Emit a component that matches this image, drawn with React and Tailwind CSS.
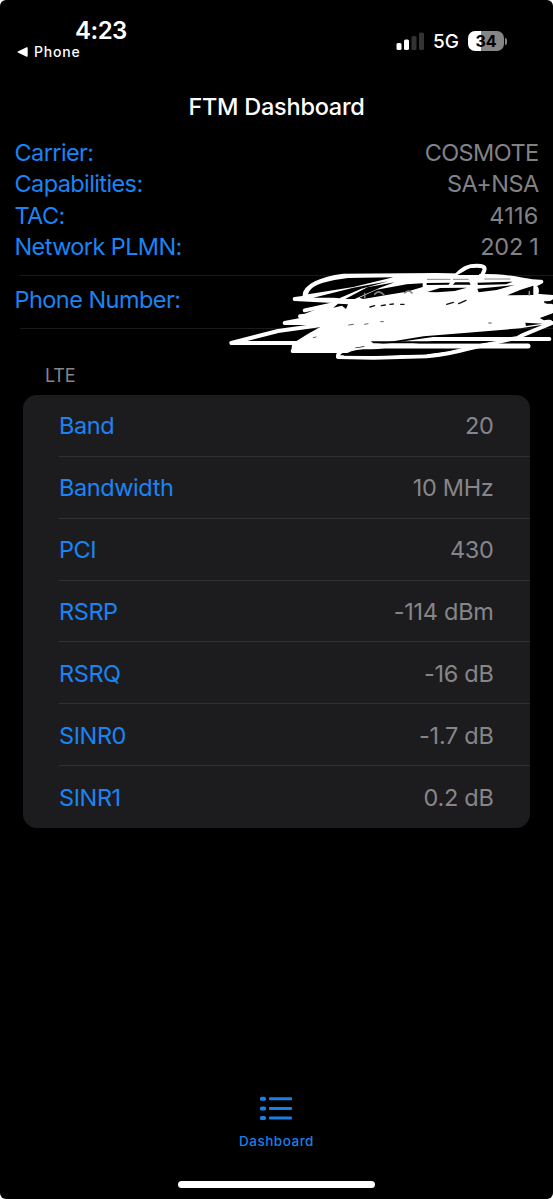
import React from "react";

const infoRows = [
  { label: "Carrier:", value: "COSMOTE", spacing: "tracking-[-0.6px]" },
  { label: "Capabilities:", value: "SA+NSA", spacing: "tracking-[-0.6px]" },
  { label: "TAC:", value: "4116", spacing: "tracking-[0.2px]" },
  { label: "Network PLMN:", value: "202 1", spacing: "tracking-[-0.3px]" },
];

const lteRows = [
  { label: "Band", value: "20" },
  { label: "Bandwidth", value: "10 MHz" },
  { label: "PCI", value: "430" },
  { label: "RSRP", value: "-114 dBm" },
  { label: "RSRQ", value: "-16 dB" },
  { label: "SINR0", value: "-1.7 dB" },
  { label: "SINR1", value: "0.2 dB" },
];

function StatusBar() {
  return (
    <header className="flex h-[85px] justify-between pl-[17px] pr-[46px] pt-[17px] text-white">
      <div>
        <p className="pl-[58px] text-[24px] font-semibold leading-[28px] tracking-[-0.5px]">4:23</p>
        <div className="flex items-center gap-[6px] text-[14px] font-medium leading-[14px] tracking-[0.8px]">
          <svg width="11" height="10" viewBox="0 0 11 10" fill="currentColor">
            <path d="M0.8 4.4 9.6 0.3Q10.7 0 10.7 1V9Q10.7 10 9.6 9.7L0.8 5.6Q0 5 0.8 4.4Z" />
          </svg>
          Phone
        </div>
      </div>
      <div className="flex h-[48px] items-center">
        <svg width="29" height="18" viewBox="0 0 29 18">
          <rect x="0.5" y="11" width="5" height="7" rx="1.5" fill="#fff" />
          <rect x="8" y="7.5" width="5" height="10.5" rx="1.5" fill="#fff" />
          <rect x="15.5" y="4" width="5" height="14" rx="1.5" fill="#333" />
          <rect x="23" y="0.5" width="5" height="17.5" rx="1.5" fill="#333" />
        </svg>
        <span className="ml-[8px] pt-[2px] text-[19px] font-medium">5G</span>
        <div className="ml-[9px] flex h-[20px] w-[36px] items-center justify-center rounded-[7px] bg-linear-to-r from-white from-35% to-[#858585] to-35% text-[16px] font-bold text-black">
          34
        </div>
        <span className="ml-px h-[7px] w-[2px] rounded-r-full bg-[#858585]" />
      </div>
    </header>
  );
}

function Scribble() {
  return (
    <svg
      className="absolute left-[220px] top-[255px]"
      width="333"
      height="110"
      viewBox="0 0 999 330"
      fill="none"
      stroke="#fff"
      strokeWidth="12"
      strokeLinecap="round"
      strokeLinejoin="round"
    >
      <path
        d="M254 128C248 92 310 70 370 62L650 60 830 64C900 68 925 82 964 80L940 92Q956 98 948 122L999 126 960 150 994 152 994 170 940 190 990 200 900 214 760 226 610 238 500 256 430 268 320 286 220 288 222 270 270 240 320 212 282 206 260 196 260 180 330 154 340 138 224 132Z"
        fill="#fff"
      />
      <path d="M704 66C730 38 746 32 770 32Q798 32 793 46L784 66" />
      <path d="M254 166 330 150M240 184 320 176M280 204H194L300 184" />
      <path d="M330 206 174 228 34 264H230" />
      <path d="M218 288 390 288 640 252H988" />
      <path d="M440 273H924" strokeWidth="15" />
      <path d="M400 280Q352 284 354 306L460 308 620 304Q690 296 740 282L890 248 996 204" />

      {/* gaps left between the pen strokes */}
      <g fill="#000" stroke="none">
        <path d="M264 118C272 86 330 76 384 69L520 67 400 96Z" />
        <path d="M280 128 400 98 505 79 424 101 358 130 340 128Z" />
        <path d="M376 132 442 97 524 82 480 98 404 132Z" />
        <path d="M418 128 470 104 560 88 608 85 608 96 560 110 500 120 430 132Z" />
        <path d="M340 158 354 146 384 148 378 162 366 152Z" />
        <path d="M620 84 690 83 686 89 620 90ZM706 82 748 82 752 89 698 89Z" />
        <path d="M622 111 660 99 740 98 704 108 650 112Z" />
        <path d="M712 60 750 40 784 40 777 60Z" />
        <path d="M772 83 878 80 858 88 774 90ZM772 101 884 90 830 105 776 112Z" />
        <path d="M862 121 900 105 940 92 940 120Z" />
        <path d="M972 139 999 138V145H974ZM960 190 999 178V192L972 196Z" />
        <path d="M916 203 968 206 918 213Z" />
        <path d="M610 246 760 237 920 224 890 244 860 246Z" />
        <path d="M452 259H830L780 265H460Z" />
        <path d="M370 302Q388 286 430 283H710Q660 294 610 298L460 303Z" />
      </g>
      <g stroke="#888" strokeWidth="5">
        <path d="M434 116v12M464 118q12-16 28 2M554 114q12-12 22 0M928 110v10" />
        <path d="M622 73H690M700 73H745M794 72H870" strokeWidth="3" />
      </g>
      <g stroke="#111" strokeWidth="4">
        <path d="M450 156 464 152M484 152 496 150M510 148 520 147M542 148H552M680 148 700 142M716 146 738 136" />
        <path d="M386 210 400 208M434 208 444 206M482 200H490M280 248 288 246M806 204H814" strokeWidth="2" />
      </g>
    </svg>
  );
}

function ListIcon() {
  return (
    <svg className="-ml-[2px]" width="34" height="26" viewBox="0 0 34 26" fill="#1b7fe6">
      <rect x="1" y="1.8" width="6" height="4" rx="1.6" />
      <rect x="10" y="2.3" width="23" height="3" rx="1" />
      <rect x="1" y="11.5" width="6" height="4" rx="1.6" />
      <rect x="10" y="12" width="23" height="3" rx="1" />
      <rect x="1" y="21" width="6" height="4" rx="1.6" />
      <rect x="10" y="21.5" width="23" height="3" rx="1" />
    </svg>
  );
}

export default function App() {
  return (
    <div className="bg-white">
      <div className="relative flex h-[1199px] w-[553px] flex-col overflow-hidden rounded-[6px] bg-black font-['Inter',sans-serif]">
        <StatusBar />
        <h1 className="h-[52px] pt-[8px] text-center text-[23.5px] font-medium leading-[28px] tracking-[-0.25px] text-white">
          FTM Dashboard
        </h1>

        <section className="h-[138px] px-[14.5px] text-[23.5px]">
          {infoRows.map((row) => (
            <div key={row.label} className="flex h-[31.4px] items-center justify-between">
              <span className="tracking-[-0.6px] text-[#1b84f5]">{row.label}</span>
              <span className={`text-[#828286] ${row.spacing}`}>{row.value}</span>
            </div>
          ))}
        </section>
        <div className="ml-[20px] flex h-[54px] items-center border-y border-[#19191b]">
          <span className="-ml-[5.5px] pb-[4px] text-[23.5px] tracking-[-0.55px] text-[#1b84f5]">Phone Number:</span>
        </div>

        <h2 className="h-[66px] pl-[45px] pt-[35px] text-[18px] leading-[24px] tracking-[-0.2px] text-[#86868a]">
          LTE
        </h2>
        <section className="mx-[23px] rounded-[14px] bg-[#1c1c1e] pl-[36px] text-[23.5px]">
          {lteRows.map((row) => (
            <div
              key={row.label}
              className="flex h-[61.86px] items-center justify-between border-b border-[#303033] pr-[36.5px] pt-px last:border-b-0"
            >
              <span className="tracking-[-0.4px] text-[#1b84f5]">{row.label}</span>
              <span className="tracking-[-0.3px] text-[#86868a]">{row.value}</span>
            </div>
          ))}
        </section>

        <nav className="mt-auto flex h-[104px] flex-col items-center text-[#1b7fe6]">
          <ListIcon />
          <span className="mt-[11px] text-[13.5px] font-medium leading-[18px] tracking-[0.5px]">Dashboard</span>
          <span className="mb-[11px] mt-auto h-[7px] w-[197px] rounded-full bg-white" />
        </nav>
        <Scribble />
      </div>
    </div>
  );
}
